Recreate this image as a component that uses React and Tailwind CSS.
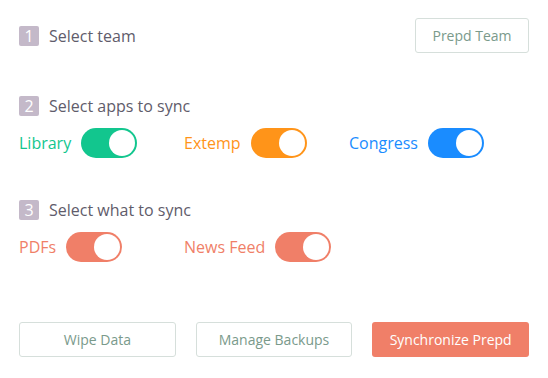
import React from "react";

function Badge({ n }) {
  return (
    <span className="flex h-[20px] w-[20px] items-center justify-center rounded-[2px] bg-[#c4b9c9] text-[16px] leading-none text-white">
      {n}
    </span>
  );
}

function Header({ n, children }) {
  return (
    <div className="flex h-[20px] items-center gap-[10px]">
      <Badge n={n} />
      <span className="text-[16px] leading-none text-[#5f5c6b]">{children}</span>
    </div>
  );
}

function Toggle({ label, color, text }) {
  return (
    <div className="flex items-center gap-[10px]">
      <span className={`text-[16px] leading-none ${text}`}>{label}</span>
      <span className={`flex h-[30px] w-[56px] items-center justify-end rounded-full p-[2px] ${color}`}>
        <span className="h-[26px] w-[26px] rounded-full bg-white" />
      </span>
    </div>
  );
}

export default function App() {
  return (
    <div
      className="flex h-[378px] w-[548px] flex-col bg-white px-[19px] pt-[18px]"
      style={{ fontFamily: '"Open Sans", sans-serif' }}
    >
      <div className="flex h-[35px] items-center justify-between">
        <Header n="1">Select team</Header>
        <button className="h-[35px] w-[114px] rounded-[3px] border border-[#d6dfdb] text-[14px] text-[#7a9a8b]">
          Prepd Team
        </button>
      </div>

      <div className="mt-[43px]">
        <Header n="2">Select apps to sync</Header>
      </div>
      <div className="mt-[12px] grid grid-cols-[165px_165px_165px]">
        <Toggle label="Library" color="bg-[#12c68e]" text="text-[#12c68e]" />
        <Toggle label="Extemp" color="bg-[#ff9419]" text="text-[#ff9419]" />
        <Toggle label="Congress" color="bg-[#1a8cff]" text="text-[#1a8cff]" />
      </div>

      <div className="mt-[42px]">
        <Header n="3">Select what to sync</Header>
      </div>
      <div className="mt-[12px] grid grid-cols-[165px_165px_165px]">
        <Toggle label="PDFs" color="bg-[#f07f68]" text="text-[#f07f68]" />
        <Toggle label="News Feed" color="bg-[#f07f68]" text="text-[#f07f68]" />
      </div>

      <div className="mt-[60px] grid grid-cols-3 gap-[20px]">
        <button className="h-[35px] rounded-[3px] border border-[#d6dfdb] text-[14px] text-[#7a9a8b]">
          Wipe Data
        </button>
        <button className="h-[35px] rounded-[3px] border border-[#d6dfdb] text-[14px] text-[#7a9a8b]">
          Manage Backups
        </button>
        <button className="h-[35px] rounded-[3px] bg-[#f07f68] text-[14px] text-white">
          Synchronize Prepd
        </button>
      </div>
    </div>
  );
}
